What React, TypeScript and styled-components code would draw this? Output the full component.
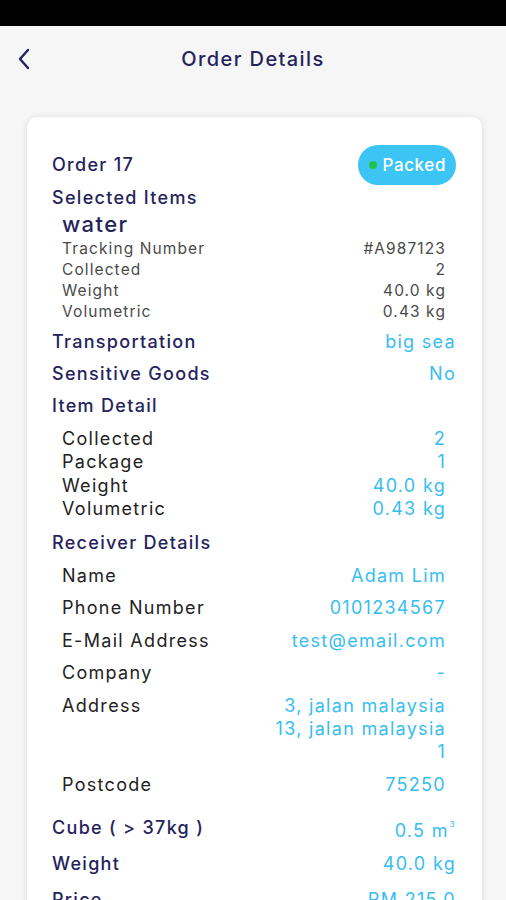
import React from "react"
import styled, { createGlobalStyle } from "styled-components"

const GlobalStyle = createGlobalStyle`
	html, body {
		margin: 0;
		padding: 0;
		background: #f6f6f6;
		font-family: Inter, "Noto Sans", sans-serif;
		overflow: hidden;
	}
`

type Row = { label: string; value: React.ReactNode }

const itemRows: Row[] = [
	{ label: "Tracking Number", value: "#A987123" },
	{ label: "Collected", value: "2" },
	{ label: "Weight", value: "40.0 kg" },
	{ label: "Volumetric", value: "0.43 kg" },
]

const detailRows: Row[] = [
	{ label: "Collected", value: "2" },
	{ label: "Package", value: "1" },
	{ label: "Weight", value: "40.0 kg" },
	{ label: "Volumetric", value: "0.43 kg" },
]

const receiverRows: Row[] = [
	{ label: "Name", value: "Adam Lim" },
	{ label: "Phone Number", value: "0101234567" },
	{ label: "E-Mail Address", value: "test@email.com" },
	{ label: "Company", value: "-" },
	{
		label: "Address",
		value: (
			<>
				3, jalan malaysia
				<br />
				13, jalan malaysia
				<br />1
			</>
		),
	},
	{ label: "Postcode", value: "75250" },
]

const App: React.FC = () => {
	return (
		<Screen>
			<GlobalStyle />
			<StatusBar />
			<Header>
				<BackButton aria-label="back">
					<svg width="16" height="22" viewBox="0 0 16 22">
						<path
							d="M12 2 L4 11 L12 20"
							fill="none"
							stroke="#24235c"
							strokeWidth="2.4"
							strokeLinecap="round"
							strokeLinejoin="round"
						/>
					</svg>
				</BackButton>
				<HeaderTitle>Order Details</HeaderTitle>
			</Header>
			<Body>
				<Card>
					<TopRow>
						<MainLabel>Order 17</MainLabel>
						<Badge>
							<Dot />
							Packed
						</Badge>
					</TopRow>
					<MainLabel>Selected Items</MainLabel>
					<ItemName>water</ItemName>
					<SubList>
						{itemRows.map((r) => (
							<SmallRow key={r.label}>
								<span>{r.label}</span>
								<span>{r.value}</span>
							</SmallRow>
						))}
					</SubList>
					<MainRow $first>
						<MainLabel>Transportation</MainLabel>
						<MainValue>big sea</MainValue>
					</MainRow>
					<MainRow>
						<MainLabel>Sensitive Goods</MainLabel>
						<MainValue>No</MainValue>
					</MainRow>
					<MainRow>
						<MainLabel>Item Detail</MainLabel>
					</MainRow>
					<DetailList>
						{detailRows.map((r) => (
							<DetailRow key={r.label}>
								<DetailLabel>{r.label}</DetailLabel>
								<DetailValue>{r.value}</DetailValue>
							</DetailRow>
						))}
					</DetailList>
					<MainRow>
						<MainLabel>Receiver Details</MainLabel>
					</MainRow>
					<SubList>
						{receiverRows.map((r) => (
							<DetailRow key={r.label} $spaced>
								<DetailLabel>{r.label}</DetailLabel>
								<DetailValue>{r.value}</DetailValue>
							</DetailRow>
						))}
					</SubList>
					<TotalsList>
						<TotalRow>
							<MainLabel>Cube ( &gt; 37kg )</MainLabel>
							<MainValue>
								0.5 m<Sup>3</Sup>
							</MainValue>
						</TotalRow>
						<TotalRow>
							<MainLabel>Weight</MainLabel>
							<MainValue>40.0 kg</MainValue>
						</TotalRow>
						<TotalRow>
							<MainLabel>Price</MainLabel>
							<MainValue>RM 215.0</MainValue>
						</TotalRow>
					</TotalsList>
				</Card>
			</Body>
		</Screen>
	)
}

export default App

const Screen = styled.div`
	width: 506px;
	height: 900px;
	overflow: hidden;
	background: #f6f6f6;
`

const StatusBar = styled.div`
	height: 26px;
	background: #000;
`

const Header = styled.header`
	position: relative;
	height: 66px;
	display: flex;
	align-items: center;
	justify-content: center;
`

const BackButton = styled.button`
	position: absolute;
	left: 16px;
	top: 22px;
	border: none;
	background: none;
	padding: 0;
	display: flex;
`

const HeaderTitle = styled.h1`
	margin: 0;
	font-size: 20px;
	font-weight: 500;
	letter-spacing: 1.4px;
	color: #24235c;
`

const Body = styled.main`
	padding: 25px 24px 0 27px;
`

const Card = styled.section`
	background: #fff;
	border-radius: 10px;
	box-shadow: 0 1px 6px rgba(0, 0, 0, 0.12);
	padding: 28px 26px 40px 25px;
	color: #24235c;
`

const TopRow = styled.div`
	display: flex;
	justify-content: space-between;
	align-items: center;
	height: 40px;
	margin-bottom: 1px;
`

const MainLabel = styled.div`
	font-size: 18px;
	line-height: 24px;
	font-weight: 500;
	letter-spacing: 1.3px;
	color: #24235c;
`

const MainValue = styled.div`
	font-size: 18px;
	line-height: 24px;
	letter-spacing: 1.3px;
	color: #38bdf0;
	text-align: right;
`

const Badge = styled.div`
	display: flex;
	align-items: center;
	gap: 5px;
	height: 40px;
	padding: 0 10px 0 11px;
	border-radius: 20px;
	background: #3cc4f4;
	color: #fff;
	font-size: 17px;
	font-weight: 500;
	letter-spacing: 0.6px;
`

const Dot = styled.span`
	width: 8px;
	height: 8px;
	border-radius: 50%;
	background: #22c24a;
`

const ItemName = styled.div`
	padding-left: 10px;
	font-size: 22px;
	line-height: 28px;
	font-weight: 500;
	letter-spacing: 1.4px;
	color: #24235c;
`

const SubList = styled.div`
	padding: 0 10px;
`

const SmallRow = styled.div`
	display: flex;
	justify-content: space-between;
	font-size: 15.5px;
	line-height: 21px;
	letter-spacing: 1.1px;
	color: #4a4a4a;
`

const MainRow = styled.div<{ $first?: boolean }>`
	display: flex;
	justify-content: space-between;
	align-items: center;
	height: 32px;
	margin-top: ${(p) => (p.$first ? "4px" : "0")};
`

const DetailList = styled.div`
	padding: 5px 10px 7px;
`

const DetailRow = styled.div<{ $spaced?: boolean }>`
	display: flex;
	justify-content: space-between;
	align-items: flex-start;
	padding: ${(p) => (p.$spaced ? "4.6px 0" : "0")};
`

const DetailLabel = styled.div`
	font-size: 18px;
	line-height: 23.3px;
	letter-spacing: 1.3px;
	color: #222;
`

const DetailValue = styled.div`
	font-size: 18px;
	line-height: 23.3px;
	letter-spacing: 1.3px;
	color: #38bdf0;
	text-align: right;
`

const TotalsList = styled.div`
	margin-top: 9px;
`

const TotalRow = styled.div`
	display: flex;
	justify-content: space-between;
	align-items: center;
	height: 36px;
`

const Sup = styled.sup`
	font-size: 8px;
	vertical-align: 10px;
	margin-left: 1px;
`
